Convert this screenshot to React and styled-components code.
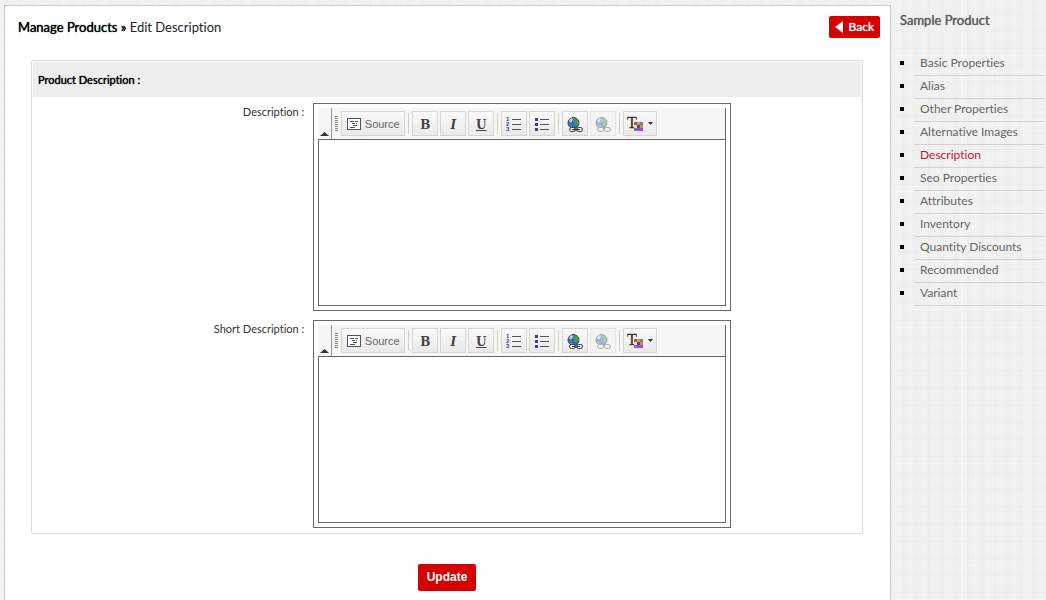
import React from "react";
import styled, { createGlobalStyle } from "styled-components";

const GlobalStyle = createGlobalStyle`
  *, *::before, *::after { box-sizing: border-box; }
  body {
    margin: 0;
    font-family: Lato, "Liberation Sans", sans-serif;
    font-size: 12px;
    line-height: 16px;
    font-variant-ligatures: none;
    color: #333;
    background-color: #f1f1f1;
    background-image:
      repeating-linear-gradient(90deg, rgba(255,255,255,.18) 0 1px, transparent 1px 5px, rgba(0,0,0,.006) 5px 8px, transparent 8px 13px),
      repeating-linear-gradient(90deg, rgba(255,255,255,.12) 0 2px, transparent 2px 31px),
      repeating-linear-gradient(0deg, rgba(255,255,255,.18) 0 1px, transparent 1px 7px, rgba(0,0,0,.006) 7px 9px, transparent 9px 17px);
  }
`;

const Page = styled.div`
  display: flex;
  min-height: 100vh;
  padding: 5px 0 0 4px;
`;

const Panel = styled.main`
  flex: 1;
  min-width: 0;
  background: #fff;
  border: 1px solid #ccc;
  border-bottom: 0;
`;

const TopBar = styled.header`
  display: flex;
  align-items: center;
  justify-content: space-between;
  padding: 10px 10px 0 13px;
`;

const Crumbs = styled.h1`
  margin: 0;
  font-size: 13px;
  font-weight: 400;
  line-height: 22px;
  color: #222;
`;

const CrumbLink = styled.a`
  color: #000;
  text-shadow: 0 0 1px #000;
  text-decoration: none;
`;

const BackButton = styled.button`
  display: flex;
  align-items: center;
  gap: 6px;
  height: 22px;
  padding: 0 6px;
  border: 0;
  border-radius: 2px;
  background: #d60000;
  color: #fff;
  font: 400 12px/22px Lato, "Liberation Sans", sans-serif;
  text-shadow: 0 0 1px #fff;
`;

const Form = styled.form`
  padding: 22px 27px 9px 26px;
`;

const Card = styled.section`
  padding: 1px 1px 5px;
  border: 1px solid #ddd;
  border-radius: 2px;
`;

const CardTitle = styled.h2`
  margin: 0 0 6px;
  padding: 0 5px;
  background: #eee;
  color: #000;
  font-size: 11px;
  font-weight: 400;
  text-shadow: 0 0 1px #000;
  line-height: 35px;
`;

const Field = styled.div`
  display: grid;
  grid-template-columns: 33% 418px;
  column-gap: 7px;
  & + & { margin-top: 9px; }
`;

const Label = styled.label`
  padding-right: 2px;
  text-align: right;
  font-size: 11px;
  line-height: 18px;
`;

const Editor = styled.div`
  padding: 4px;
  border: 1px solid #696969;
`;

const Toolbar = styled.div`
  display: flex;
  height: 31px;
  padding-right: 4px;
  align-items: center;
  background: #f6f6f4;
  border-right: 1px solid #696969;
`;

const Collapser = styled.button`
  display: flex;
  align-items: flex-end;
  align-self: stretch;
  width: 14px;
  padding: 0 0 3px 2px;
  border: 0;
  border-right: 1px solid #999;
  background: #f6f6f2;
`;

const Grip = styled.span`
  width: 3px;
  height: 15px;
  margin: 0 3px;
  background: repeating-linear-gradient(#8a8a80 0 1px, transparent 1px 2px);
`;

const ToolButton = styled.button`
  display: flex;
  align-items: center;
  justify-content: center;
  gap: 4px;
  width: ${(p) => p.$width || 26}px;
  height: 25px;
  margin-right: 2px;
  padding: 0;
  border: 1px solid ${(p) => (p.disabled ? "#e6e6e0" : "#d6d6cc")};
  background: ${(p) => (p.disabled ? "#f4f4f2" : "linear-gradient(#fafafa, #e9e9e9)")};
  color: #666;
  font: 11px/18px "Liberation Sans", Arial, sans-serif;
`;

const Separator = styled.span`
  width: 1px;
  height: 21px;
  margin: 0 3px 0 1px;
  background: #cfcfc6;
`;

const Letter = styled.span`
  padding-top: 2px;
  color: #444;
  font: 700 12px/18px "DejaVu Serif", serif;
  font-style: ${(p) => (p.$italic ? "italic" : "normal")};
  text-decoration: ${(p) => (p.$underline ? "underline" : "none")};
`;

const TextArea = styled.textarea`
  display: block;
  width: 100%;
  height: 167px;
  resize: none;
  border: 1px solid #696969;
  border-radius: 0;
  background: #fff;
  outline: 0;
`;

const Actions = styled.div`
  display: flex;
  justify-content: center;
  padding-top: 30px;
`;

const UpdateButton = styled.button`
  height: 27px;
  padding: 0 9px 2px;
  border: 0;
  border-radius: 2px;
  background: #d60000;
  color: #fff;
  font: 700 12px/24px "Liberation Sans", Arial, sans-serif;
`;

const Sidebar = styled.aside`
  width: 155px;
  flex: none;
  padding: 6px 2px 0 8px;
`;

const SideTitle = styled.h2`
  margin: 0 0 24px;
  padding-left: 1px;
  font-size: 13px;
  font-weight: 400;
  text-shadow: 0 0 1px #666;
  line-height: 18px;
  color: #5a5a5a;
`;

const SideList = styled.ul`
  margin: 0;
  padding: 0;
  list-style: none;
`;

const SideItem = styled.li`
  display: flex;
  align-items: center;
  gap: 10px;
  &::before {
    content: "";
    flex: none;
    width: 4px;
    height: 4px;
    margin: 0 0 3px 1px;
    background: #000;
  }
`;

const SideLink = styled.a`
  flex: 1;
  padding: 1px 6px 3px;
  border-bottom: 1px solid #d4d4d4;
  color: ${(p) => (p.$active ? "#c8102e" : "#666")};
  font-size: 12px;
  line-height: 18px;
  white-space: nowrap;
  text-decoration: none;
`;

const SourceIcon = () => (
  <svg width="14" height="12" viewBox="0 0 14 12" fill="none" stroke="#4c5260" shapeRendering="crispEdges">
    <path d="M.5 .5h13v11H.5z" fill="#fff" />
    <path d="M3 3.5h4M8 3.5h3M5 5.5h3M9 5.5h1M6 7.5h4M3 9.5h5" />
  </svg>
);

const NumberedIcon = () => (
  <svg width="16" height="16" viewBox="0 0 16 16">
    <g fill="#3d3d8c" fontFamily="Liberation Sans" fontSize="6" fontWeight="700">
      <text x="0" y="5">1</text>
      <text x="0" y="10">2</text>
      <text x="0" y="15">3</text>
    </g>
    <path d="M6 3.5h9M6 8.5h9M6 13.5h9" stroke="#555" shapeRendering="crispEdges" />
  </svg>
);

const BulletIcon = () => (
  <svg width="16" height="16" viewBox="0 0 16 16" shapeRendering="crispEdges">
    <path d="M1 2h3v3H1zM1 7h3v3H1zM1 12h3v3H1z" fill="#3d3d9c" />
    <path d="M6 3.5h9M6 8.5h9M6 13.5h9" stroke="#555" />
  </svg>
);

const GlobeIcon = ({ faded }) => (
  <svg width="16" height="18" viewBox="0 0 16 18" opacity={faded ? 0.45 : 1}>
    <circle cx="6.5" cy="8" r="5.5" fill="#3465c8" stroke="#2c4a80" />
    <path d="M6 3l4 1 2 4-2 3-3-2 1-2-3-1z" fill="#4d9c3c" />
    <path d="M2 9l3 1v3L3 12z" fill="#4d9c3c" />
    <path d="M2 6l2-3 2 1-2 4z" fill="#bcd6f4" />
    <g fill="#eee" stroke={faded ? "#555" : "#333"}>
      <rect x="2.5" y="12.5" width="6" height="4" rx="2" />
      <rect x="9.5" y="12.5" width="6" height="4" rx="2" />
    </g>
    {!faded && <path d="M5 14.5h8" stroke="#333" />}
  </svg>
);

const TextColorIcon = () => (
  <svg width="17" height="22" viewBox="0 0 17 22">
    <text x="0" y="15" fill="#333" stroke="#333" strokeWidth=".3" fontFamily="Liberation Serif" fontSize="16">T</text>
    <g shapeRendering="crispEdges">
      <path d="M7 9h3v3H7z" fill="#a65a48" />
      <path d="M10 9h3v3h-3z" fill="#e08a70" />
      <path d="M13 9h3v3h-3z" fill="#4f9b72" />
      <path d="M7 12h3v3H7z" fill="#ede28b" />
      <path d="M10 12h3v3h-3z" fill="#4b4d91" />
      <path d="M13 12h3v3h-3z" fill="#da814e" />
      <path d="M7 15h3v3H7z" fill="#577ed5" />
      <path d="M10 15h6v3h-6z" fill="#af48b8" />
    </g>
  </svg>
);

const Triangle = ({ d, w, h, fill }) => (
  <svg width={w} height={h} viewBox={`0 0 ${w} ${h}`}><path d={d} fill={fill} /></svg>
);

function RichEditor({ id }) {
  return (
    <Editor>
      <Toolbar role="toolbar">
        <Collapser type="button" aria-label="Collapse toolbar">
          <Triangle w={9} h={4} d="M0 4L4.5 0 9 4z" fill="#333" />
        </Collapser>
        <Grip />
        <ToolButton type="button" $width={64}><SourceIcon />Source</ToolButton>
        <Separator />
        <ToolButton type="button" aria-label="Bold"><Letter>B</Letter></ToolButton>
        <ToolButton type="button" aria-label="Italic"><Letter $italic>I</Letter></ToolButton>
        <ToolButton type="button" aria-label="Underline"><Letter $underline>U</Letter></ToolButton>
        <Separator />
        <ToolButton type="button" aria-label="Numbered list"><NumberedIcon /></ToolButton>
        <ToolButton type="button" aria-label="Bulleted list"><BulletIcon /></ToolButton>
        <Separator />
        <ToolButton type="button" aria-label="Link"><GlobeIcon /></ToolButton>
        <ToolButton type="button" aria-label="Unlink" disabled><GlobeIcon faded /></ToolButton>
        <Separator />
        <ToolButton type="button" aria-label="Text color" $width={34}>
          <TextColorIcon />
          <Triangle w={5} h={3} d="M0 0h5L2.5 3z" fill="#333" />
        </ToolButton>
      </Toolbar>
      <TextArea id={id} />
    </Editor>
  );
}

const links = [
  "Basic Properties", "Alias", "Other Properties", "Alternative Images", "Description",
  "Seo Properties", "Attributes", "Inventory", "Quantity Discounts", "Recommended", "Variant",
];

export default function App() {
  return (
    <>
      <GlobalStyle />
      <Page>
        <Panel>
          <TopBar>
            <Crumbs><CrumbLink href="#products">Manage Products »</CrumbLink> Edit Description</Crumbs>
            <BackButton type="button">
              <Triangle w={8} h={12} d="M8 0v12L0 6z" fill="#fff" />Back
            </BackButton>
          </TopBar>
          <Form onSubmit={(e) => e.preventDefault()}>
            <Card>
              <CardTitle>Product Description :</CardTitle>
              <Field>
                <Label htmlFor="description">Description :</Label>
                <RichEditor id="description" />
              </Field>
              <Field>
                <Label htmlFor="short">Short Description :</Label>
                <RichEditor id="short" />
              </Field>
            </Card>
            <Actions><UpdateButton type="submit">Update</UpdateButton></Actions>
          </Form>
        </Panel>
        <Sidebar>
          <SideTitle>Sample Product</SideTitle>
          <SideList>
            {links.map((name) => (
              <SideItem key={name}>
                <SideLink href="#section" $active={name === "Description"}>{name}</SideLink>
              </SideItem>
            ))}
          </SideList>
        </Sidebar>
      </Page>
    </>
  );
}
